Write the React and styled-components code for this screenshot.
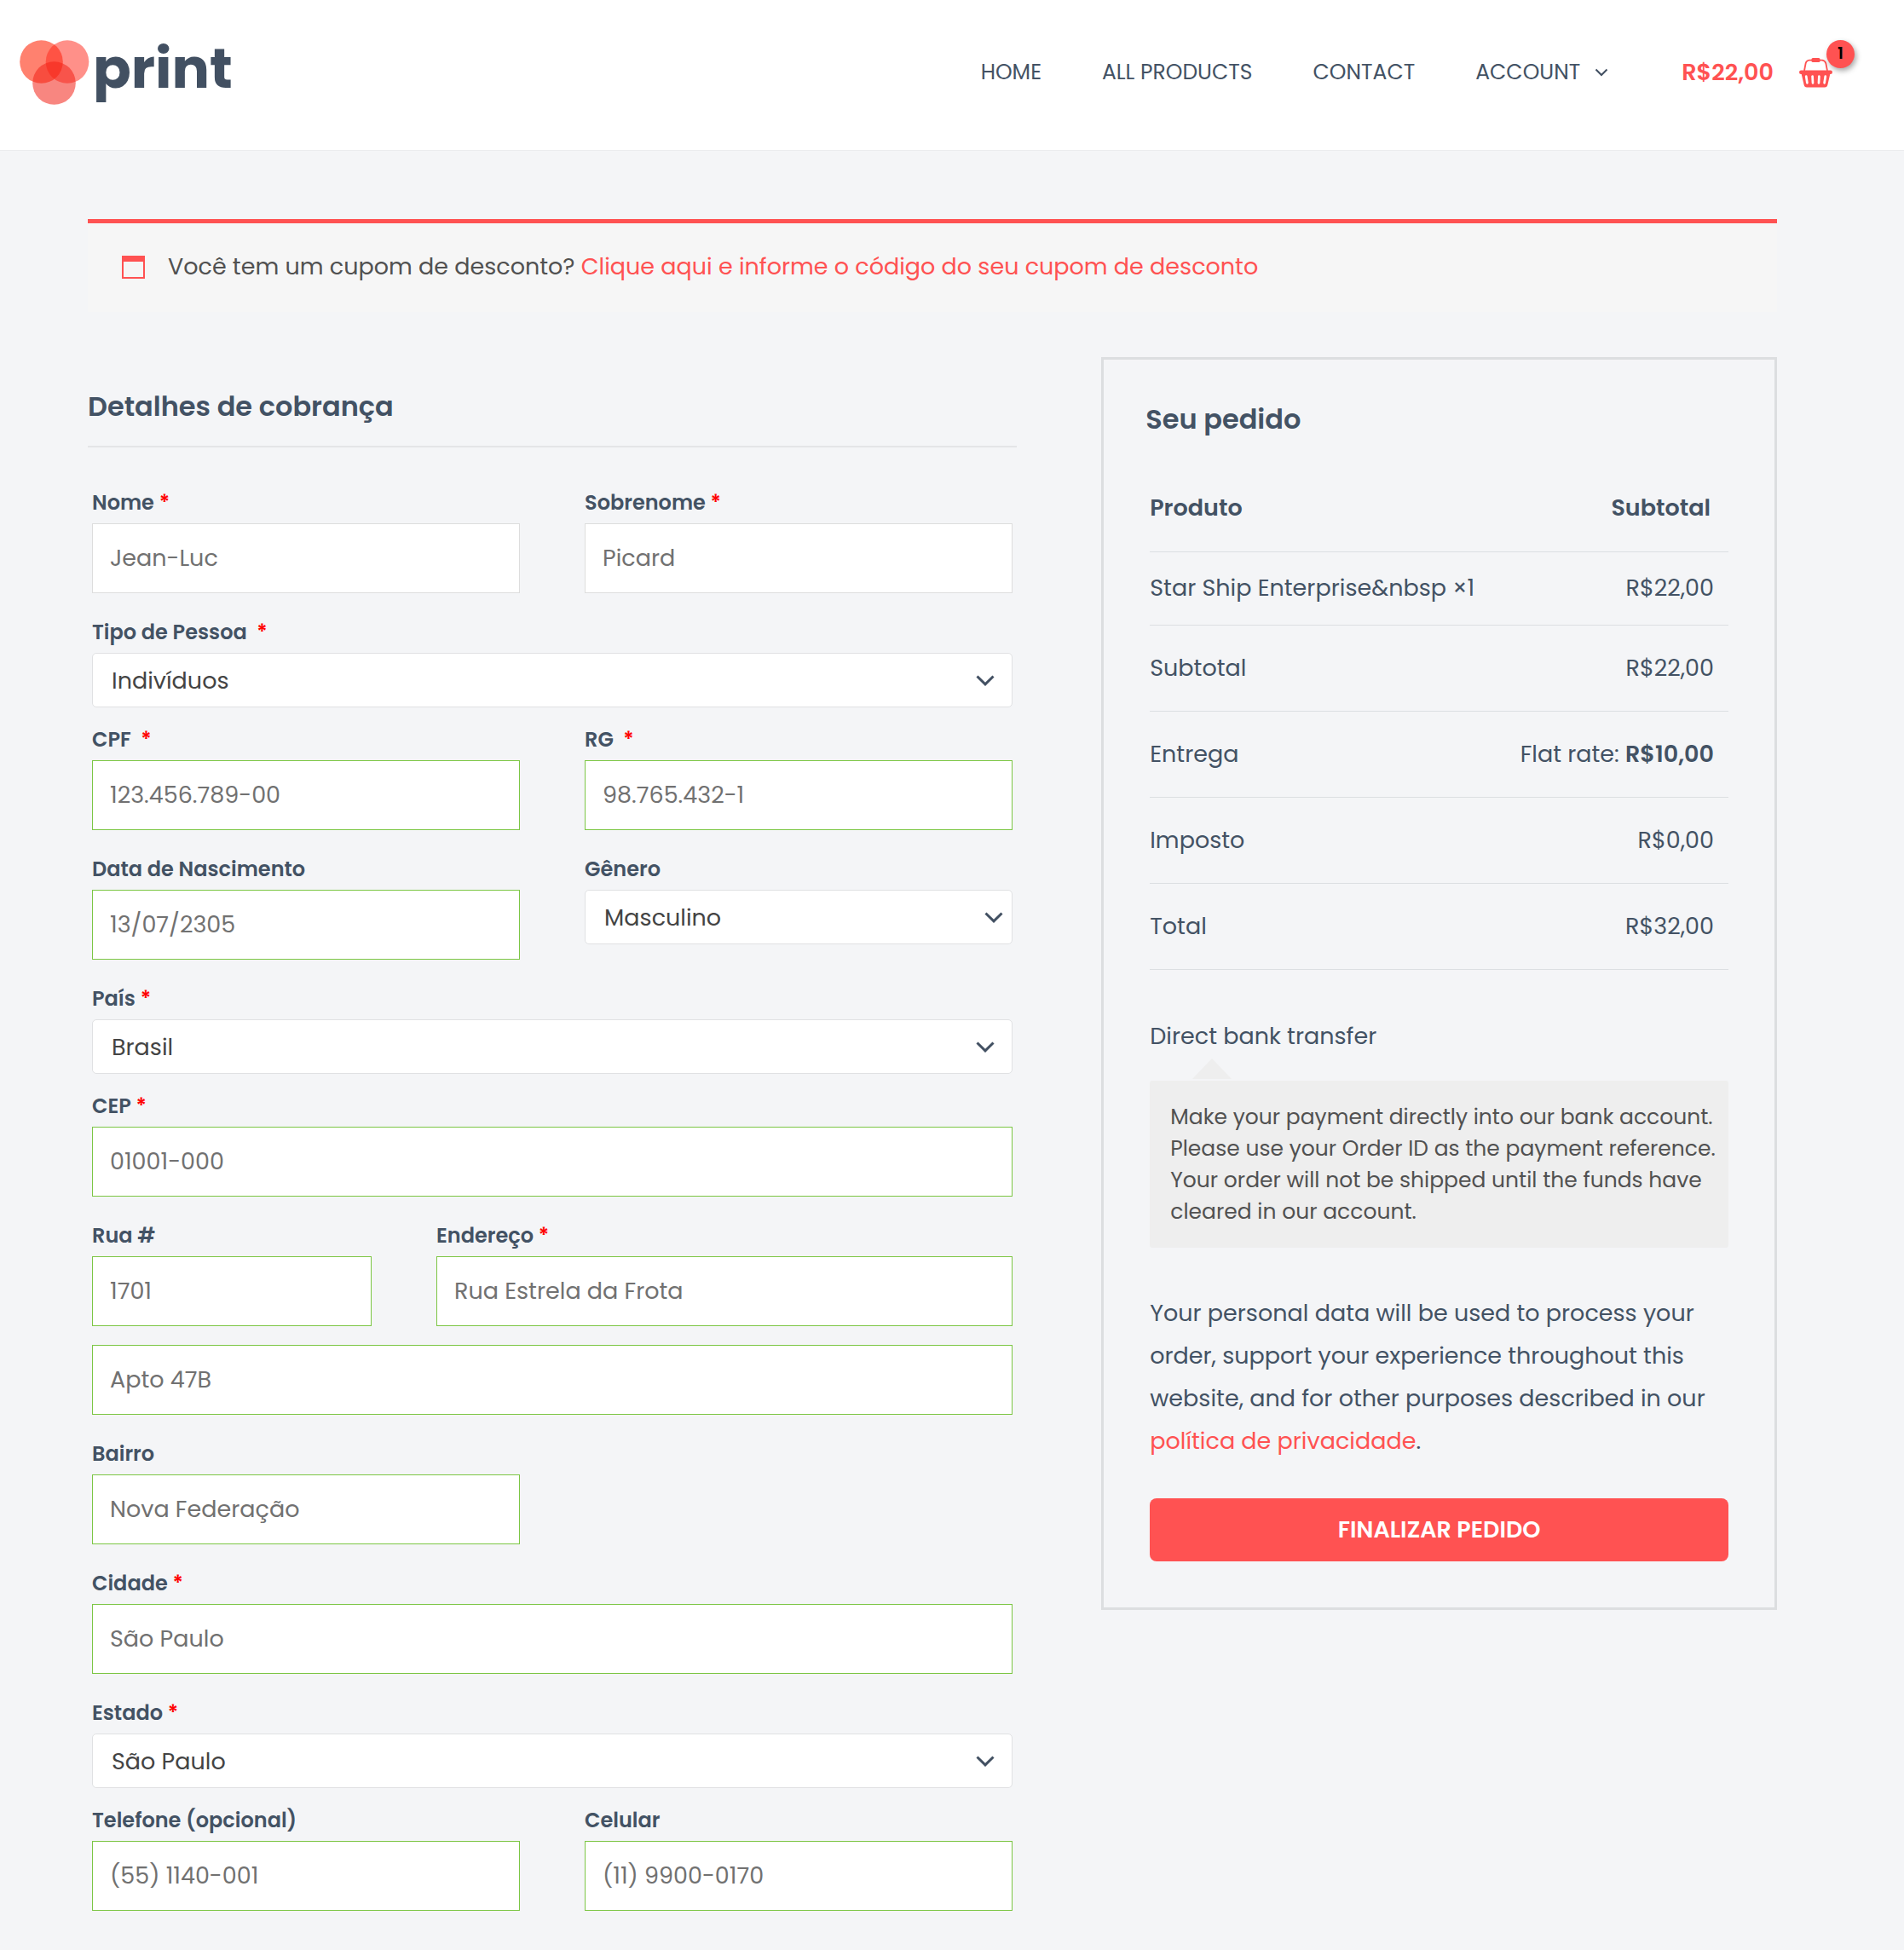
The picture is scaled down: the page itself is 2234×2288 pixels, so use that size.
import styled, { createGlobalStyle } from 'styled-components';

const GlobalStyle = createGlobalStyle`
  *, *::before, *::after {
    box-sizing: border-box;
  }

  body {
    margin: 0;
    background: #f4f5f7;
    color: #435264;
    font-family: Poppins, Inter, 'Open Sans', sans-serif;
    font-size: 27px;
  }

  input, select, button {
    font: inherit;
  }

  a {
    text-decoration: none;
  }
`;

const Header = styled.header`
  display: flex;
  justify-content: space-between;
  align-items: center;
  height: 177px;
  padding: 0 84px 6px 23px;
  background: #fff;
  border-bottom: 1px solid #ebecee;
`;

const Logo = styled.a`
  display: flex;
  align-items: center;
  gap: 4px;
  color: #425062;
`;

const LogoMark = styled.svg`
  width: 82px;
  height: 76px;
`;

const LogoText = styled.span`
  font-size: 66px;
  font-weight: 700;
  line-height: 76px;
  padding-bottom: 10px;
`;

const HeaderRight = styled.div`
  display: flex;
  align-items: center;
  gap: 86px;
`;

const Nav = styled.nav`
  display: flex;
  align-items: center;
  gap: 71px;
`;

const NavLink = styled.a`
  display: flex;
  align-items: center;
  gap: 17px;
  color: #435264;
  font-size: 25px;
  line-height: 36px;
`;

const Cart = styled.a`
  position: relative;
  display: flex;
  align-items: center;
  gap: 30px;
  color: #ff5252;
  font-size: 27px;
  font-weight: 600;
  line-height: 36px;
`;

const CartBadge = styled.span`
  position: absolute;
  top: -20px;
  right: -26px;
  width: 33px;
  height: 33px;
  border-radius: 50%;
  background: #ff5252;
  box-shadow: 2px 3px 6px rgba(0, 0, 0, 0.35);
  color: #000;
  font-size: 19px;
  line-height: 32px;
  text-align: center;
`;

const Main = styled.main`
  padding: 80px 149px 46px 103px;
`;

const Notice = styled.div`
  display: flex;
  align-items: center;
  gap: 27px;
  height: 109px;
  padding: 0 40px 2px;
  border-top: 5px solid #ff5252;
  background: #f6f6f6;
  color: #515151;
`;

const Link = styled.a`
  color: #ff5252;
`;

const Columns = styled.form`
  display: grid;
  grid-template-columns: 55% 40%;
  justify-content: space-between;
  align-items: start;
  margin-top: 53px;
`;

const Title = styled.h3`
  margin: 0;
  font-size: 32px;
  font-weight: 600;
  line-height: 50px;
`;

const BillingTitle = styled(Title)`
  padding: 33px 0 21px;
  border-bottom: 2px solid #e4e5e7;
`;

const Fields = styled.div`
  padding: 41px 5px 0;
`;

const Row = styled.div`
  display: grid;
  grid-template-columns: ${({ $columns }) => $columns || '1fr'};
  column-gap: 76px;
  align-items: start;
  margin-bottom: ${({ $tight }) => ($tight ? '14px' : '22px')};
`;

const Label = styled.label`
  display: block;
  font-size: 24px;
  font-weight: 600;
  line-height: 48px;
`;

const Required = styled.span`
  color: #f00;
`;

const Input = styled.input`
  display: block;
  width: 100%;
  height: 82px;
  padding: 0 20px;
  border: 1px solid ${({ $valid }) => ($valid ? '#7cc644' : '#dddddd')};
  border-radius: 0;
  outline: none;
  background: #fff;
  color: #717171;
`;

const SelectBox = styled.div`
  position: relative;
`;

const Select = styled.select`
  display: block;
  width: 100%;
  height: 64px;
  padding: 0 64px 0 22px;
  appearance: none;
  border: 1px solid #e0e1e3;
  border-radius: 5px;
  background: #fff;
  color: #444;
`;

const SelectArrow = styled.svg`
  position: absolute;
  top: 26px;
  right: ${({ $compact }) => ($compact ? '11px' : '21px')};
  width: 22px;
  height: 13px;
  pointer-events: none;
`;

const Order = styled.section`
  padding: 45px 54px 54px;
  border: 3px solid #dcdee0;
`;

const OrderTitle = styled(Title)`
  margin-left: -5px;
`;

const Table = styled.table`
  width: 100%;
  margin-top: 29px;
  border-collapse: collapse;
`;

const Line = styled.tr`
  height: ${({ $short }) => ($short ? '86px' : '101px')};
  border-bottom: 1px solid #dcdfe2;
`;

const Cell = styled.td`
  padding: 0;
  font-weight: 400;
  text-align: left;

  &:last-child {
    padding-right: 17px;
    text-align: right;
  }
`;

const HeadCell = styled(Cell)`
  font-weight: 600;

  &:last-child {
    padding-right: 21px;
  }
`;

const Price = styled.strong`
  font-weight: 600;
`;

const Method = styled.p`
  margin: 58px 0 32px;
  line-height: 40px;
`;

const MethodBox = styled.div`
  position: relative;
  padding: 24px 8px 24px 24px;
  border-radius: 3px;
  background: #eee;
  color: #515151;
  font-size: 25px;
  line-height: 37px;

  &::before {
    content: '';
    position: absolute;
    top: -26px;
    left: 50px;
    border: 23px solid transparent;
    border-top-width: 0;
    border-bottom: 24px solid #eee;
  }
`;

const Privacy = styled.p`
  margin: 52px 0 42px;
  line-height: 50px;
`;

const SubmitButton = styled.button`
  display: block;
  width: 100%;
  height: 74px;
  border: 0;
  border-radius: 8px;
  background: #ff5252;
  color: #fff;
  font-weight: 600;
`;

const rows = [
  {
    columns: '1fr 1fr',
    fields: [
      { id: 'nome', label: 'Nome', required: true, value: 'Jean-Luc' },
      { id: 'sobrenome', label: 'Sobrenome', required: true, value: 'Picard' },
    ],
  },
  {
    tight: true,
    fields: [
      {
        id: 'tipo',
        label: 'Tipo de Pessoa\u00a0',
        required: true,
        options: ['Indivíduos', 'Pessoa Jurídica'],
      },
    ],
  },
  {
    columns: '1fr 1fr',
    fields: [
      { id: 'cpf', label: 'CPF\u00a0', required: true, valid: true, value: '123.456.789-00' },
      { id: 'rg', label: 'RG\u00a0', required: true, valid: true, value: '98.765.432-1' },
    ],
  },
  {
    columns: '1fr 1fr',
    fields: [
      { id: 'nascimento', label: 'Data de Nascimento', valid: true, value: '13/07/2305' },
      { id: 'genero', label: 'Gênero', compact: true, options: ['Masculino', 'Feminino'] },
    ],
  },
  {
    tight: true,
    fields: [{ id: 'pais', label: 'País', required: true, options: ['Brasil'] }],
  },
  {
    fields: [{ id: 'cep', label: 'CEP', required: true, valid: true, value: '01001-000' }],
  },
  {
    columns: '82fr 169fr',
    fields: [
      { id: 'numero', label: 'Rua #', valid: true, value: '1701' },
      {
        id: 'endereco',
        label: 'Endereço',
        required: true,
        valid: true,
        value: 'Rua Estrela da Frota',
      },
    ],
  },
  {
    fields: [{ id: 'complemento', ariaLabel: 'Complemento', valid: true, value: 'Apto 47B' }],
  },
  {
    columns: '1fr 1fr',
    fields: [{ id: 'bairro', label: 'Bairro', valid: true, value: 'Nova Federação' }],
  },
  {
    fields: [{ id: 'cidade', label: 'Cidade', required: true, valid: true, value: 'São Paulo' }],
  },
  {
    tight: true,
    fields: [
      { id: 'estado', label: 'Estado', required: true, options: ['São Paulo', 'Rio de Janeiro'] },
    ],
  },
  {
    columns: '1fr 1fr',
    fields: [
      { id: 'telefone', label: 'Telefone (opcional)', valid: true, value: '(55) 1140-001' },
      { id: 'celular', label: 'Celular', valid: true, value: '(11) 9900-0170' },
    ],
  },
];

const totals = [
  { name: 'Subtotal', value: 'R$22,00' },
  { name: 'Entrega', prefix: 'Flat rate: ', value: 'R$10,00' },
  { name: 'Imposto', value: 'R$0,00' },
  { name: 'Total', value: 'R$32,00' },
];

const BasketIcon = () => (
  <svg width="39" height="35" viewBox="0 0 39 35" aria-hidden="true">
    <path
      d="M6 15 L7.6 6.5 Q8.3 3 12 2.6 H27 Q30.5 3 31.4 6.5 L33 15"
      fill="none"
      stroke="#ff5252"
      strokeWidth="1.8"
    />
    <rect x="14.5" y="0" width="10" height="5" rx="1.5" fill="#ff5252" />
    <rect x="0" y="14.5" width="39" height="4.5" rx="2.2" fill="#ff5252" />
    <path d="M2.5 18 H36.5 L33.4 31.5 Q32.8 34.5 30 34.5 H9 Q6.2 34.5 5.6 31.5 Z" fill="#ff5252" />
    <path
      d="M8.2 21.5 L9.4 29.3 M15.6 21.5 L16 29.3 M23.4 21.5 L23 29.3 M30.8 21.5 L29.6 29.3"
      stroke="#fff"
      strokeWidth="2.7"
      strokeLinecap="round"
    />
  </svg>
);

const Field = ({ field }) => (
  <div>
    {field.label && (
      <Label htmlFor={field.id}>
        {field.label} {field.required && <Required>*</Required>}
      </Label>
    )}
    {field.options ? (
      <SelectBox>
        <Select id={field.id}>
          {field.options.map((option) => (
            <option key={option}>{option}</option>
          ))}
        </Select>
        <SelectArrow $compact={field.compact} viewBox="0 0 22 13" aria-hidden="true">
          <path d="M1.5 1.5 L11 10.8 L20.5 1.5" fill="none" stroke="#425062" strokeWidth="3" />
        </SelectArrow>
      </SelectBox>
    ) : (
      <Input
        id={field.id}
        type="text"
        aria-label={field.ariaLabel}
        $valid={field.valid}
        defaultValue={field.value}
      />
    )}
  </div>
);

const App = () => {
  return (
    <>
      <GlobalStyle />
      <Header>
        <Logo href="#">
          <LogoMark viewBox="0 0 82 76" aria-hidden="true">
            <circle cx="25.5" cy="25.5" r="25.3" fill="#ff816f" />
            <circle cx="56" cy="25.5" r="25.3" fill="#ff2a1c" fillOpacity="0.52" />
            <circle cx="40.5" cy="50.5" r="25.3" fill="#f32317" fillOpacity="0.55" />
          </LogoMark>
          <LogoText>print</LogoText>
        </Logo>
        <HeaderRight>
          <Nav>
            <NavLink href="#">HOME</NavLink>
            <NavLink href="#">ALL PRODUCTS</NavLink>
            <NavLink href="#">CONTACT</NavLink>
            <NavLink href="#">
              ACCOUNT
              <svg width="16" height="10" viewBox="0 0 16 10" aria-hidden="true">
                <path d="M1.5 1.5 L8 8 L14.5 1.5" fill="none" stroke="#425062" strokeWidth="2" />
              </svg>
            </NavLink>
          </Nav>
          <Cart href="#">
            R$22,00
            <BasketIcon />
            <CartBadge>1</CartBadge>
          </Cart>
        </HeaderRight>
      </Header>

      <Main>
        <Notice>
          <svg width="27" height="27" viewBox="0 0 27 27" aria-hidden="true">
            <rect x="1" y="1" width="25" height="25" fill="none" stroke="#ff5252" strokeWidth="2" />
            <rect width="27" height="7" fill="#ff5252" />
          </svg>
          <span>
            Você tem um cupom de desconto?{' '}
            <Link href="#">Clique aqui e informe o código do seu cupom de desconto</Link>
          </span>
        </Notice>

        <Columns onSubmit={(e) => e.preventDefault()}>
          <section>
            <BillingTitle>Detalhes de cobrança</BillingTitle>
            <Fields>
              {rows.map((row) => (
                <Row key={row.fields[0].id} $columns={row.columns} $tight={row.tight}>
                  {row.fields.map((field) => (
                    <Field key={field.id} field={field} />
                  ))}
                </Row>
              ))}
            </Fields>
          </section>

          <Order>
            <OrderTitle>Seu pedido</OrderTitle>
            <Table>
              <thead>
                <Line>
                  <HeadCell as="th">Produto</HeadCell>
                  <HeadCell as="th">Subtotal</HeadCell>
                </Line>
              </thead>
              <tbody>
                <Line $short>
                  <Cell>{'Star Ship Enterprise&nbsp ×1'}</Cell>
                  <Cell>R$22,00</Cell>
                </Line>
                {totals.map(({ name, prefix, value }) => (
                  <Line key={name}>
                    <Cell as="th">{name}</Cell>
                    <Cell>
                      {prefix}
                      {prefix ? <Price>{value}</Price> : value}
                    </Cell>
                  </Line>
                ))}
              </tbody>
            </Table>

            <Method>Direct bank transfer</Method>
            <MethodBox>
              Make your payment directly into our bank account. Please use your Order ID as the
              payment reference. Your order will not be shipped until the funds have cleared in our
              account.
            </MethodBox>

            <Privacy>
              Your personal data will be used to process your order, support your experience
              throughout this website, and for other purposes described in our{' '}
              <Link href="#">política de privacidade</Link>.
            </Privacy>
            <SubmitButton type="submit">FINALIZAR PEDIDO</SubmitButton>
          </Order>
        </Columns>
      </Main>
    </>
  );
};

export default App;
